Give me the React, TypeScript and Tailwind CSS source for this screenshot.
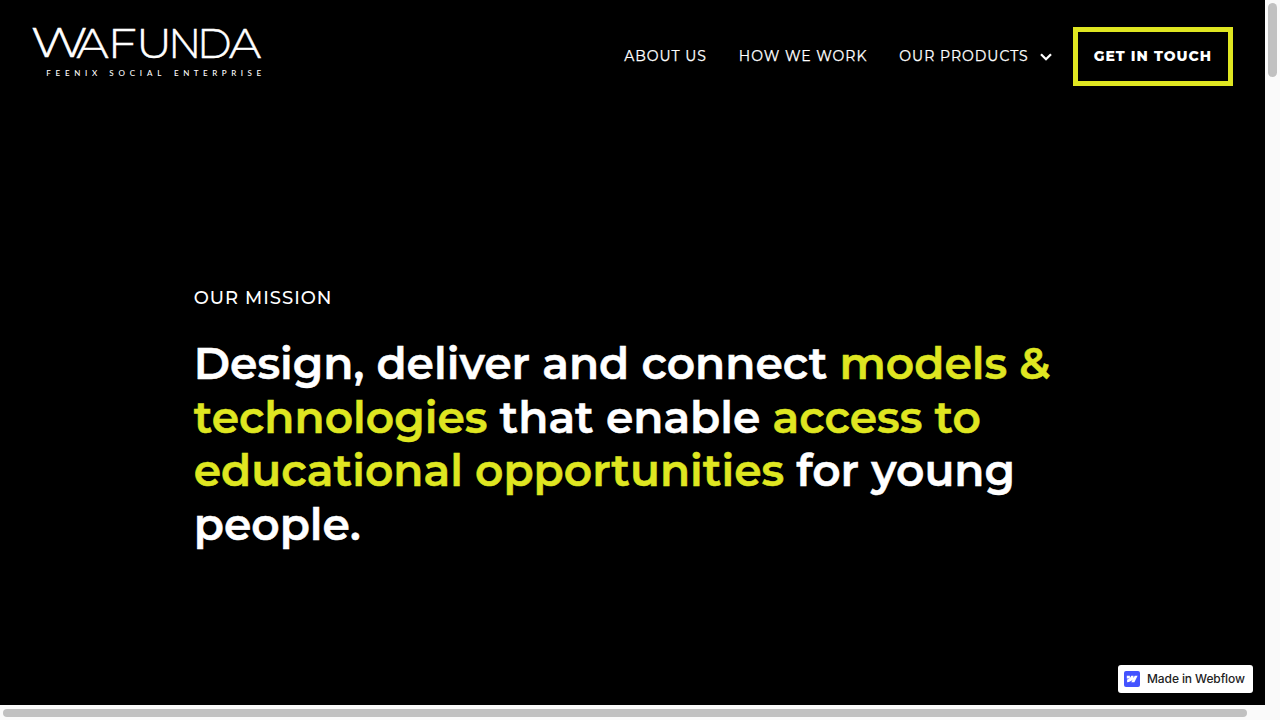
const LETTERS = [
  { ch: "W", x: 30.8, w: 57, y: 57 },
  { ch: "A", x: 76.5, w: 32, y: 58 },
  { ch: "F", x: 107.8, w: 29, y: 58 },
  { ch: "U", x: 136, w: 36, y: 58 },
  { ch: "N", x: 168.2, w: 33, y: 58 },
  { ch: "D", x: 197, w: 34.5, y: 58 },
  { ch: "A", x: 229, w: 32, y: 58 },
];

const TAGLINE = [
  { word: "FEENIX", x: 46.3, w: 51 },
  { word: "SOCIAL", x: 109.3, w: 52 },
  { word: "ENTERPRISE", x: 174, w: 87 },
];

function Logo() {
  return (
    <svg className="h-[60px] w-[240px] overflow-visible text-white" viewBox="30 20 240 60" fill="currentColor" role="img">
      <g className="font-['Montserrat','Lato',sans-serif] text-[42px] leading-none font-light" stroke="currentColor" strokeWidth="0.5">
        {LETTERS.map((l, i) => (
          <text key={i} x={l.x} y={l.y} textLength={l.w} lengthAdjust="spacingAndGlyphs">
            {l.ch}
          </text>
        ))}
      </g>
      <g className="font-['Lato',sans-serif] text-[8px] leading-none font-medium">
        {TAGLINE.map((t) => (
          <text key={t.word} x={t.x} y="75.8" textLength={t.w}>
            {t.word}
          </text>
        ))}
      </g>
    </svg>
  );
}

function Header() {
  return (
    <header className="flex h-[113px] items-center justify-between pr-8 pl-[30px]">
      <div className="-mt-[13px]">
        <Logo />
      </div>
      <nav className="flex items-center text-sm leading-[17px] font-normal tracking-[1px] [-webkit-text-stroke:0.25px]">
        <a className="px-4">ABOUT US</a>
        <a className="px-4">HOW WE WORK</a>
        <a className="flex items-center pr-[21px] pl-4">
          OUR PRODUCTS
          <svg className="mt-px ml-[11px] h-2 w-3" viewBox="0 0 12 8" fill="none" stroke="currentColor" strokeWidth="2.3">
            <path d="M1 1.200 6 6.200 11 1.200" />
          </svg>
        </a>
        <a className="border-[5px] border-[#dfe621] p-4 font-extrabold [-webkit-text-stroke:0]">GET IN TOUCH</a>
      </nav>
    </header>
  );
}

function Accent({ children }: { children: string }) {
  return <span className="text-[#dfe621]">{children}</span>;
}

function Badge() {
  return (
    <a className="absolute right-3 bottom-3 flex h-7 w-[135px] items-center gap-[7px] rounded-[3px] bg-white pl-1.5 font-['Inter',sans-serif] text-xs font-medium tracking-[-0.1px] text-[#222]">
      <svg className="size-4" viewBox="0 0 16 16">
        <rect width="16" height="16" rx="2" fill="#4353ff" />
        <path
          fill="#fff"
          d="M13.600 4.800 10.400 11.200H7.300l1.400-2.700C7.600 10 5.800 11 3.100 11.200V8.600s1.600-.1 2.500-1H2.800V4.800h3.100v2.300L7.200 4.800h2.300v2.300l1.200-2.300z"
        />
      </svg>
      <span>Made in Webflow</span>
    </a>
  );
}

export default function App() {
  return (
    <div className="grid h-[720px] w-[1280px] grid-cols-[1265px_15px] grid-rows-[705px_15px] overflow-hidden bg-[#fafafa] font-['Montserrat','Inter',sans-serif]">
      <div className="relative bg-black text-white">
        <Header />
        <main className="mt-[174px] ml-[193.75px] w-[876px]">
          <p className="text-lg leading-[22px] font-medium tracking-[1px]">OUR MISSION</p>
          <h1 className="mt-7 text-[44px] leading-[53.7px] font-semibold [-webkit-text-stroke:0.5px]">
            Design, deliver and connect <Accent>models &amp; technologies</Accent> that enable{" "}
            <Accent>access to educational opportunities</Accent> for young people.
          </h1>
        </main>
        <Badge />
      </div>
      <div className="flex justify-center pt-[3px]">
        <div className="h-[74px] w-[9px] rounded-full bg-[#c1c1c1]" />
      </div>
      <div className="flex pt-1 pl-[3px]">
        <div className="h-2 w-[1244px] rounded-full bg-[#c1c1c1]" />
      </div>
      <div />
    </div>
  );
}
